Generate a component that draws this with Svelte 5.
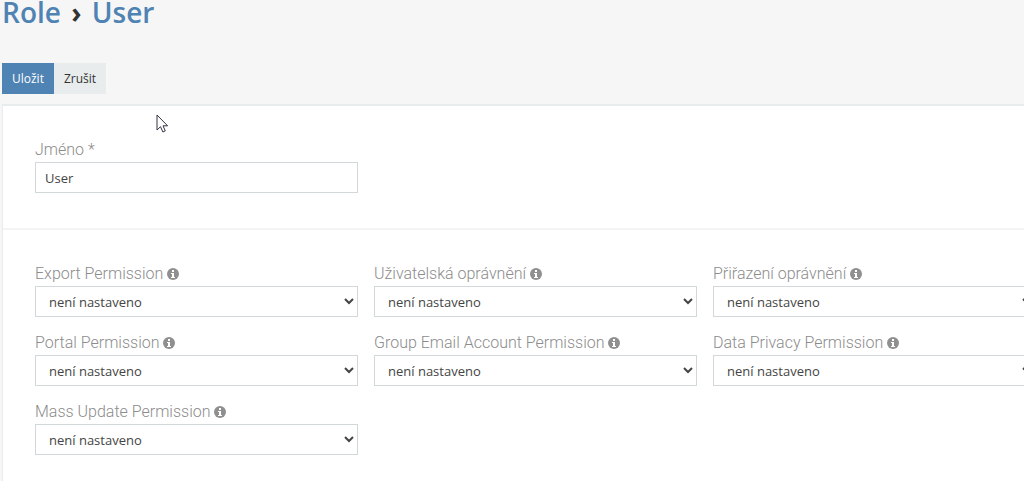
<script>
    let name = $state('User');

    const permissions = $state([
        { id: 'export', label: 'Export Permission', value: 'not-set' },
        { id: 'user', label: 'Uživatelská oprávnění', value: 'not-set' },
        { id: 'assignment', label: 'Přiřazení oprávnění', value: 'not-set' },
        { id: 'portal', label: 'Portal Permission', value: 'not-set' },
        { id: 'group-email', label: 'Group Email Account Permission', value: 'not-set' },
        { id: 'data-privacy', label: 'Data Privacy Permission', value: 'not-set' },
        { id: 'mass-update', label: 'Mass Update Permission', value: 'not-set' }
    ]);
</script>

<div class="role-page">
    <h3 class="page-title">
        <a href="#Role">Role</a>
        <span class="chevron">›</span>
        <a href="#Role/view">User</a>
    </h3>

    <div class="button-bar">
        <button type="button" class="btn btn-primary">Uložit</button>
        <button type="button" class="btn">Zrušit</button>
    </div>

    <div class="record">
        <section class="panel">
            <div class="cell">
                <label for="role-name">Jméno *</label>
                <input id="role-name" type="text" bind:value={name} />
            </div>
        </section>
        <section class="panel">
            {#each permissions as permission (permission.id)}
                <div class="cell">
                    <label for={permission.id}>
                        {permission.label}
                        <svg class="info" viewBox="0 0 12 12" aria-hidden="true">
                            <circle cx="6" cy="6" r="6" />
                            <path d="M5 2h2v2H5zM4 5h3v4h1v1H4V9h1V6H4z" />
                        </svg>
                    </label>
                    <select id={permission.id} bind:value={permission.value}>
                        <option value="not-set">není nastaveno</option>
                    </select>
                </div>
            {/each}
        </section>
    </div>

    <svg class="cursor" viewBox="0 0 12 19" aria-hidden="true">
        <path d="M1 1v15l3.5-3.3 2.4 5.3 2.4-1.1-2.3-5.1h4.6z" />
    </svg>
</div>

<style>
    :global(body) {
        background: #f6f6f6;
        overflow: hidden;
    }

    .role-page {
        position: relative;
        padding-left: 2px;
        font-family: "Open Sans", sans-serif;
        font-size: 14px;
        color: #333;
    }

    .page-title {
        margin: 0;
        padding-bottom: 39px;
        font-size: 28px;
        line-height: 24px;
        font-weight: 600;
    }

    .page-title a {
        color: #4f83b3;
        text-decoration: none;
    }

    .chevron {
        margin: 0 3px;
        font-weight: 700;
    }

    .button-bar {
        display: flex;
        padding-bottom: 10px;
    }

    .btn {
        height: 31px;
        padding: 0 10px;
        border: 0;
        background: #e8eced;
        color: #333;
        font-family: inherit;
        font-size: 12px;
    }

    .btn-primary {
        background: #4f83b3;
        color: #fff;
    }

    .record {
        width: max-content;
        min-width: 100%;
        border: 1px solid #e8eced;
        border-top-width: 2px;
        background: #fff;
    }

    .panel {
        display: grid;
        grid-template-columns: repeat(3, minmax(323px, 1fr));
        gap: 16px;
        padding: 34px 32px 35px;
    }

    .panel + .panel {
        border-top: 2px solid #f3f4f4;
    }

    .cell {
        display: flex;
        flex-direction: column;
    }

    label {
        padding-bottom: 2px;
        font-family: Roboto, sans-serif;
        font-size: 16px;
        font-weight: 300;
        line-height: 20px;
        color: #8c8c8c;
    }

    .info {
        width: 12px;
        height: 12px;
        vertical-align: -1px;
    }

    .info circle {
        fill: #8f8f8f;
    }

    .info path {
        fill: #fff;
    }

    input,
    select {
        box-sizing: border-box;
        width: 100%;
        height: 31px;
        border: 1px solid #d1d8d9;
        border-radius: 0;
        background: #fff;
        color: #444;
        font-family: inherit;
        font-size: 13px;
    }

    input {
        padding: 0 9px;
    }

    select {
        padding: 0 0 0 9px;
    }

    .cursor {
        position: absolute;
        left: 156px;
        top: 114px;
        width: 12px;
        height: 19px;
    }

    .cursor path {
        fill: #fff;
        stroke: #334;
    }
</style>
